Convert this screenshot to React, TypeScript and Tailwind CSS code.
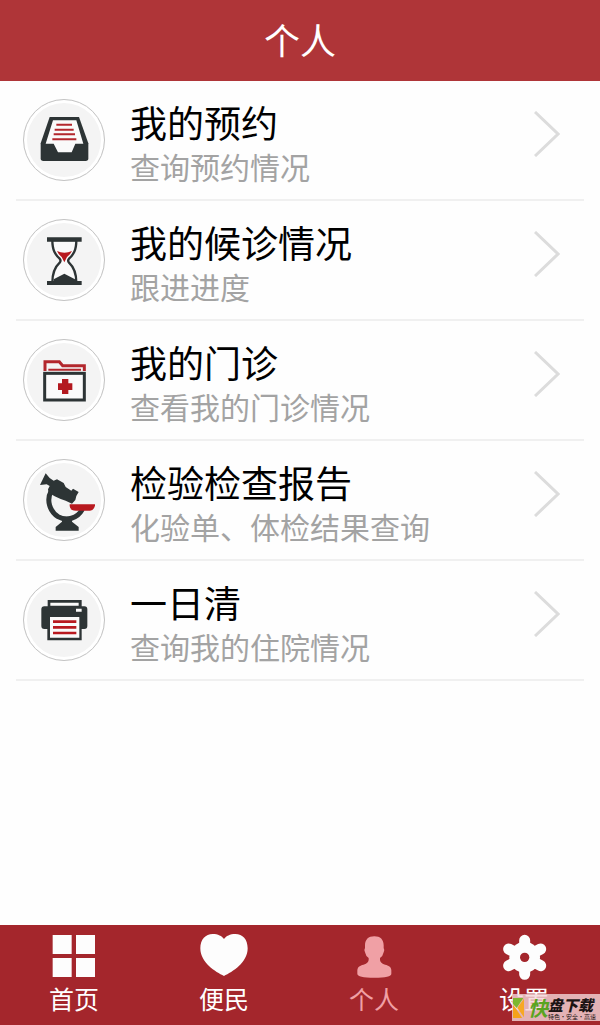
import React from 'react';

const InboxIcon = () => (
  <svg viewBox="30 30 240 240" className="h-full w-full" aria-hidden="true">
    <path d="M107 81H195L223 160V205Q223 213 215 213H88Q80 213 80 205V160Z" fill="#2d3435" />
    <path d="M117 91H187L208 161H184L173 187H132L119 161H95Z" fill="#fafafa" />
    <path d="M127 104H174M122 119H179M119 133H183M115 148H187" stroke="#b3272d" strokeWidth="6" />
  </svg>
);

const HourglassIcon = () => (
  <svg viewBox="30 30 240 240" className="h-full w-full" aria-hidden="true">
    <path
      d="M115 90C115 122 124 134 137 146Q142 152 137 158C124 170 115 188 115 218H187C187 188 178 170 165 158Q160 152 165 146C178 134 187 122 187 90Z"
      fill="#fafafa"
      stroke="#2d3435"
      strokeWidth="7"
    />
    <path d="M129 123Q151 134 174 123Q168 134 159 141L151 157L143 141Q134 134 129 123Z" fill="#b8191f" />
    <path d="M119 216V208L151 191L183 208V216Z" fill="#2d3435" />
    <path d="M99 82H203V95H99ZM99 213H203V225H99Z" fill="#2d3435" />
  </svg>
);

const FolderIcon = () => (
  <svg viewBox="30 30 240 240" className="h-full w-full" aria-hidden="true">
    <path d="M93 123V95H136L146 107H211V123" fill="none" stroke="#b3272d" strokeWidth="9" />
    <path d="M103 119H201" stroke="#b3272d" strokeWidth="6" />
    <rect x="92" y="130" width="119" height="80" fill="#fafafa" stroke="#2d3435" strokeWidth="9" />
    <path d="M144 147H163V160H175V180H163V192H144V180H132V160H144Z" fill="#b3191f" />
  </svg>
);

const MicroscopeIcon = () => (
  <svg viewBox="30 30 240 240" className="h-full w-full" aria-hidden="true">
    <path d="M112 122C96 150 107 184 132 200C157 214 190 206 205 178" fill="none" stroke="#2d3435" strokeWidth="15" />
    <path
      d="M95 70L107 84L119 92L129 88L149 99L155 111L172 122L177 116L194 126L187 138L184 150L174 161L155 152L140 147L122 139L104 128L102 118L107 108L98 103L78 105Z"
      fill="#2d3435"
    />
    <path d="M144 200H174V215L194 231V242H125V231L144 215Z" fill="#2d3435" />
    <path d="M167 163H243V167Q239 182 228 182H186Q167 182 167 168Z" fill="#b8191f" />
  </svg>
);

const PrinterIcon = () => (
  <svg viewBox="30 27 240 240" className="h-full w-full" aria-hidden="true">
    <path d="M101 106V87H203V106H211Q220 106 220 115V165Q220 174 211 174H203V208H100V174H91Q82 174 82 165V115Q82 106 91 106Z" fill="#2d3435" />
    <path d="M109 95H194V104H109ZM186 113H203V122H186ZM108 138H196V200H108Z" fill="#fafafa" />
    <path d="M117 152H187M117 169H187M117 186H187" stroke="#b8191f" strokeWidth="8" />
  </svg>
);

const GridIcon = () => (
  <svg viewBox="0 0 150 150" className="h-[50px] w-[50px]" fill="#fdfdfd" aria-hidden="true">
    <path d="M11 15H68V72H11ZM81 15H138V72H81ZM11 84H68V141H11ZM81 84H138V141H81Z" />
  </svg>
);

const HeartIcon = () => (
  <svg viewBox="0 0 150 150" className="h-[50px] w-[50px]" fill="#fdfdfd" aria-hidden="true">
    <path d="M75 138C50 126 4 98 4 55C4 28 20 12 41 12C57 12 69 18 75 27C81 18 93 12 109 12C131 12 146 28 146 55C146 98 100 126 75 138Z" />
  </svg>
);

const PersonIcon = () => (
  <svg viewBox="0 0 150 150" className="h-[50px] w-[50px]" fill="#f0a0a5" aria-hidden="true">
    <path d="M76 19C94 19 104 29 104 46V54Q108 60 104 67Q102 78 93 84V90C95 102 105 102 117 107Q127 111 127 121V131Q127 143 76 143T25 131V121Q25 111 35 107C47 102 57 102 59 90V84Q50 78 48 67Q44 60 48 54V46C48 29 58 19 76 19Z" />
  </svg>
);

const GearIcon = () => (
  <svg viewBox="0 0 150 150" className="h-[50px] w-[50px]" aria-hidden="true">
    <g stroke="#fdfdfd" strokeWidth="33" strokeLinecap="round">
      <path d="M77 31V133M29 57L125 107M125 57L29 107" />
    </g>
    <circle cx="77" cy="82" r="46" fill="#fdfdfd" />
    <circle cx="77" cy="82" r="14" fill="#a4262c" />
  </svg>
);

const items = [
  { title: '我的预约', desc: '查询预约情况', Icon: InboxIcon },
  { title: '我的候诊情况', desc: '跟进进度', Icon: HourglassIcon },
  { title: '我的门诊', desc: '查看我的门诊情况', Icon: FolderIcon },
  { title: '检验检查报告', desc: '化验单、体检结果查询', Icon: MicroscopeIcon },
  { title: '一日清', desc: '查询我的住院情况', Icon: PrinterIcon },
];

const tabs = [
  { label: '首页', Icon: GridIcon, active: false },
  { label: '便民', Icon: HeartIcon, active: false },
  { label: '个人', Icon: PersonIcon, active: true },
  { label: '设置', Icon: GearIcon, active: false },
];

const Watermark = () => (
  <div className="absolute right-0 bottom-1 flex h-[27px] w-[88px] items-center bg-[#f3d6d8]/80 pl-px">
    <svg viewBox="0 0 36 54" className="h-[20px] w-[11px] shrink-0" preserveAspectRatio="none" aria-hidden="true">
      <path d="M0 0H34L12 27L0 16Z" fill="#7db82f" />
      <path d="M0 18V54H30L8 27Z" fill="#f5a21b" />
      <path d="M36 2V52L14 27Z" fill="#f7a823" />
    </svg>
    <span className="ml-1 text-[20px] leading-[24px] font-bold text-[#5aa41f] italic">快</span>
    <div className="text-[#1c1414]">
      <div className="text-[15px] leading-[17px] font-black whitespace-nowrap italic">盘下载</div>
      <div className="text-[6px] leading-[7px] whitespace-nowrap">特色·安全·高速</div>
    </div>
  </div>
);

const App = () => {
  return (
    <div className="flex min-h-screen flex-col bg-[#fefefe] font-['Noto_Sans_CJK_SC',sans-serif]">
      <header className="flex h-[81px] items-center justify-center bg-[#af3538] pb-1">
        <h1 className="text-[36px] leading-[40px] text-white">个人</h1>
      </header>

      <main className="flex-1 px-4">
        <ul>
          {items.map(({ title, desc, Icon }) => (
            <li key={title} className="border-b-2 border-[#f0f0f0]">
              <a href="#" className="flex h-[118px] items-start pr-6 pl-[7px]">
                <span className="mt-[18px] h-[82px] w-[82px] shrink-0 rounded-full border border-[#c4c4c4] bg-[#f4f4f4] shadow-[inset_0_0_0_3px_#fff]">
                  <Icon />
                </span>
                <span className="mt-[19px] ml-[25px] flex flex-1 flex-col">
                  <span className="text-[37px] leading-[44px] text-black">{title}</span>
                  <span className="text-[30px] leading-[44px] text-[#a3a3a3]">{desc}</span>
                </span>
                <svg viewBox="0 0 26 46" className="mt-[30px] h-[46px] w-[26px] shrink-0" aria-hidden="true">
                  <path d="M1 1L24 23L1 45" fill="none" stroke="#dcdcdc" strokeWidth="3" />
                </svg>
              </a>
            </li>
          ))}
        </ul>
      </main>

      <nav className="relative grid h-[100px] grid-cols-4 bg-[#a4262c]">
        {tabs.map(({ label, Icon, active }) => (
          <a
            key={label}
            href="#"
            className={`flex flex-col items-center pt-[5px] pr-[2px] text-[25px] leading-[36px] ${
              active ? 'text-[#f0a0a5]' : 'text-white'
            }`}
          >
            <Icon />
            <span>{label}</span>
          </a>
        ))}
        <Watermark />
      </nav>
    </div>
  );
};

export default App;
